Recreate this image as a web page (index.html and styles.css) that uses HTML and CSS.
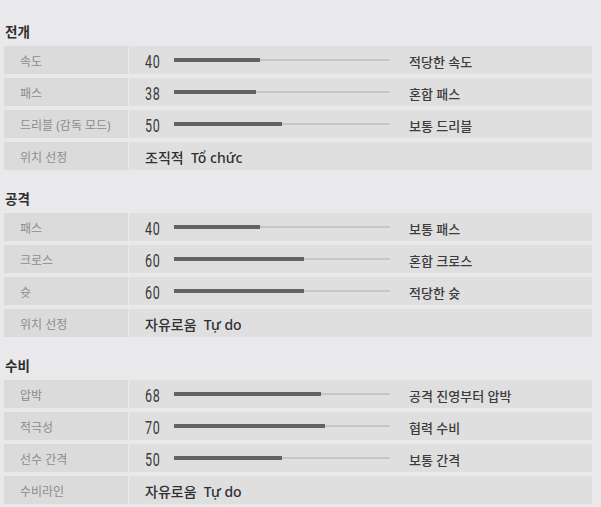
FILE: index.html
```html
<!DOCTYPE html>
<html lang="ko">
  <head>
    <meta charset="UTF-8" />
    <meta name="viewport" content="width=device-width, initial-scale=1.0" />
    <title>전술 설정</title>
    <link rel="stylesheet" href="styles.css">
  </head>
  <body>
    <section class="group">
      <h2 class="group-title">전개</h2>
      <div class="row">
        <div class="label">속도</div>
        <div class="value"><span class="num">40</span><span class="bar"><span class="fill" style="width: 40%"></span></span><span class="desc">적당한 속도</span></div>
      </div>
      <div class="row">
        <div class="label">패스</div>
        <div class="value"><span class="num">38</span><span class="bar"><span class="fill" style="width: 38%"></span></span><span class="desc">혼합 패스</span></div>
      </div>
      <div class="row">
        <div class="label">드리블 (감독 모드)</div>
        <div class="value"><span class="num">50</span><span class="bar"><span class="fill" style="width: 50%"></span></span><span class="desc">보통 드리블</span></div>
      </div>
      <div class="row">
        <div class="label">위치 선정</div>
        <div class="value"><span class="choice">조직적 &nbsp;Tổ chức</span></div>
      </div>
    </section>

    <section class="group">
      <h2 class="group-title">공격</h2>
      <div class="row">
        <div class="label">패스</div>
        <div class="value"><span class="num">40</span><span class="bar"><span class="fill" style="width: 40%"></span></span><span class="desc">보통 패스</span></div>
      </div>
      <div class="row">
        <div class="label">크로스</div>
        <div class="value"><span class="num">60</span><span class="bar"><span class="fill" style="width: 60%"></span></span><span class="desc">혼합 크로스</span></div>
      </div>
      <div class="row">
        <div class="label">슛</div>
        <div class="value"><span class="num">60</span><span class="bar"><span class="fill" style="width: 60%"></span></span><span class="desc">적당한 슛</span></div>
      </div>
      <div class="row">
        <div class="label">위치 선정</div>
        <div class="value"><span class="choice">자유로움 &nbsp;Tự do</span></div>
      </div>
    </section>

    <section class="group">
      <h2 class="group-title">수비</h2>
      <div class="row">
        <div class="label">압박</div>
        <div class="value"><span class="num">68</span><span class="bar"><span class="fill" style="width: 68%"></span></span><span class="desc">공격 진영부터 압박</span></div>
      </div>
      <div class="row">
        <div class="label">적극성</div>
        <div class="value"><span class="num">70</span><span class="bar"><span class="fill" style="width: 70%"></span></span><span class="desc">협력 수비</span></div>
      </div>
      <div class="row">
        <div class="label">선수 간격</div>
        <div class="value"><span class="num">50</span><span class="bar"><span class="fill" style="width: 50%"></span></span><span class="desc">보통 간격</span></div>
      </div>
      <div class="row">
        <div class="label">수비라인</div>
        <div class="value"><span class="choice">자유로움 &nbsp;Tự do</span></div>
      </div>
    </section>
  </body>
</html>
```

FILE: styles.css
```css
* {
  margin: 0;
  padding: 0;
  box-sizing: border-box;
}

body {
  background-color: #e9e9ec;
  color: #333333;
  font-family: "Noto Sans", "Noto Sans CJK KR", sans-serif;
  padding: 18px 9px 0 4px;
  overflow: hidden;
  height: 100vh;
}

.group {
  display: flex;
  flex-direction: column;
  gap: 4px;
  margin-bottom: 15px;
}

.group-title {
  height: 24px;
  line-height: 24px;
  padding: 2px 0 0 1px;
  font-size: 13.5px;
  font-weight: 700;
  color: #2e2e30;
}

.row {
  display: grid;
  grid-template-columns: 124px 1fr;
  gap: 1px;
  height: 28px;
}

.label {
  background: #dbdbdc;
  color: #8c8c8e;
  font-size: 12px;
  display: flex;
  align-items: center;
  padding: 2px 0 0 16px;
  white-space: nowrap;
}

.value {
  background: #dfdfe0;
  display: flex;
  align-items: center;
  padding: 2px 0 0 16px;
}

.num {
  display: inline-block;
  width: 29px;
  font-family: Roboto, "Liberation Sans", sans-serif;
  font-size: 19px;
  line-height: 1;
  color: #3a3a3c;
  transform: scaleX(0.66);
  transform-origin: left center;
  letter-spacing: 1px;
}

.bar {
  position: relative;
  width: 216px;
  height: 2px;
  margin-top: -2px;
  background: #c6c6ca;
}

.fill {
  position: absolute;
  left: 0;
  top: -1px;
  height: 4px;
  background: #626267;
}

.desc {
  margin-left: 19px;
  font-size: 13px;
  font-weight: 500;
  color: #3c3c3e;
}

.choice {
  font-size: 14px;
  font-weight: 500;
  color: #303032;
}
```
